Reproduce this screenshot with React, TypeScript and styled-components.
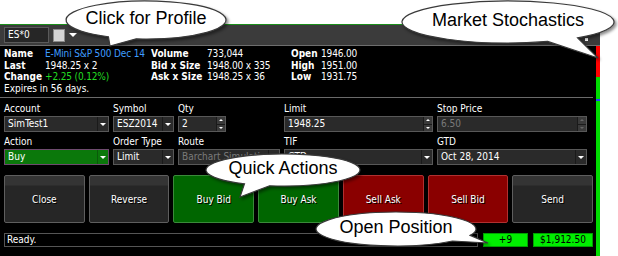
import React from "react";
import styled, { createGlobalStyle } from "styled-components";

const GlobalStyle = createGlobalStyle`
  html, body {
    margin: 0;
    padding: 0;
    background: #fff;
  }
  body {
    font-family: "DejaVu Sans Condensed", "Liberation Sans", Arial, sans-serif;
  }
`;

const Stage = styled.div`
  position: relative;
  width: 618px;
  height: 256px;
  overflow: hidden;
  background: #fff;
`;

const Panel = styled.div`
  margin-top: 24px;
  width: 600px;
  height: 232px;
  box-sizing: border-box;
  border-top: 1px solid #1b8e1b;
  background: #000;
  display: flex;
  flex-direction: column;
  color: #fff;
  font-size: 10px;
`;

const Header = styled.div`
  height: 20px;
  flex: none;
  display: flex;
  align-items: center;
  gap: 4px;
  padding-left: 4px;
  background: #3b3b3b;
  border-bottom: 1px solid #6e6e6e;
`;

const SymbolInput = styled.div`
  width: 45px;
  height: 16px;
  box-sizing: border-box;
  border: 1px solid #5a5a5a;
  background: #262626;
  padding-left: 3px;
  line-height: 14px;
`;

const CheckBox = styled.div`
  width: 10px;
  height: 11px;
  border: 1px solid #8a8a8a;
  background: #d4d4d4;
`;

const HeaderMarker = styled.div`
  margin-left: auto;
  margin-right: 12px;
  align-self: flex-end;
  margin-bottom: 4px;
  width: 3px;
  height: 3px;
  background: #fff;
`;

const Body = styled.div`
  flex: 1;
  display: flex;
  min-height: 0;
`;

const Content = styled.div`
  flex: 1;
  display: flex;
  flex-direction: column;
  padding-right: 3px;
`;

const StochBar = styled.div`
  width: 4px;
  display: flex;
  flex-direction: column;
`;

const StochSegment = styled.div<{ $color: string; $height?: number }>`
  background: ${(p) => p.$color};
  ${(p) => (p.$height ? `height: ${p.$height}px;` : "flex: 1;")}
`;

const Info = styled.div`
  display: grid;
  grid-template-columns: 41px 106px 56px 84px 30px auto;
  padding: 2px 4px 3px;
  line-height: 11.5px;
  border-bottom: 1px solid #6a6a6a;
  white-space: nowrap;
`;

const InfoLabel = styled.span`
  font-weight: bold;
`;

const InfoValue = styled.span<{ $color?: string }>`
  color: ${(p) => p.$color ?? "#fff"};
  letter-spacing: -0.15px;
`;

const Expires = styled.span`
  grid-column: 1 / -1;
`;

const Form = styled.div`
  display: grid;
  grid-template-columns: 105px 61px 102px 149px 150px;
  column-gap: 4px;
  row-gap: 4px;
  padding: 5px 4px 0;
`;

const Field = styled.div`
  display: flex;
  flex-direction: column;
  gap: 1px;
`;

const FieldLabel = styled.span`
  line-height: 12px;
  white-space: nowrap;
`;

const Control = styled.div<{ $tone?: "dark" | "green"; $width?: number }>`
  height: 16px;
  box-sizing: border-box;
  width: ${(p) => (p.$width ? `${p.$width}px` : "100%")};
  display: flex;
  align-items: stretch;
  border: 1px solid ${(p) => (p.$tone === "green" ? "#6e4a6e" : "#585858")};
  background: ${(p) => (p.$tone === "green" ? "#0b780b" : "#2a2a2a")};
`;

const ControlText = styled.span<{ $muted?: boolean }>`
  flex: 1;
  padding-left: 3px;
  line-height: 14px;
  overflow: hidden;
  white-space: nowrap;
  color: ${(p) => (p.$muted ? "#7a7a7a" : "#fff")};
`;

const ArrowCell = styled.div<{ $tone?: "dark" | "green" }>`
  width: 10px;
  display: flex;
  align-items: center;
  justify-content: center;
  border-left: 1px solid ${(p) => (p.$tone === "green" ? "#0a5a0a" : "#1a1a1a")};
`;

const SpinCell = styled.div`
  width: 8px;
  display: flex;
  flex-direction: column;
  border-left: 1px solid #1a1a1a;
`;

const SpinHalf = styled.div`
  flex: 1;
  display: flex;
  align-items: center;
  justify-content: center;
  background: #3a3a3a;
  & + & {
    border-top: 1px solid #1a1a1a;
  }
`;

const Caret = styled.span<{ $up?: boolean; $muted?: boolean; $size?: number }>`
  width: 0;
  height: 0;
  border-left: ${(p) => p.$size ?? 3}px solid transparent;
  border-right: ${(p) => p.$size ?? 3}px solid transparent;
  ${(p) =>
    p.$up
      ? `border-bottom: ${p.$size ?? 3}px solid ${p.$muted ? "#666" : "#fff"};`
      : `border-top: ${p.$size ?? 3}px solid ${p.$muted ? "#666" : "#fff"};`}
`;

const Buttons = styled.div`
  display: flex;
  gap: 4px;
  margin-top: 10px;
  padding-left: 4px;
`;

type Tone = "dark" | "green" | "red";

const tones: Record<Tone, { top: string; bottom: string; border: string }> = {
  dark: { top: "#343434", bottom: "#262626", border: "#5e5e5e" },
  green: { top: "#006600", bottom: "#006600", border: "#3a8a3a" },
  red: { top: "#8a0000", bottom: "#8a0000", border: "#b03030" },
};

const ActionButton = styled.button<{ $tone: Tone }>`
  flex: 1;
  height: 48px;
  border-radius: 2px;
  border: 1px solid ${(p) => tones[p.$tone].border};
  background: linear-gradient(
    to bottom,
    ${(p) => tones[p.$tone].top} 0,
    ${(p) => tones[p.$tone].top} 9px,
    ${(p) => tones[p.$tone].bottom} 10px
  );
  color: #fff;
  font-family: inherit;
  font-size: 10px;
  text-shadow: 1px 1px 0 #000;
  padding: 0;
`;

const Status = styled.div`
  display: flex;
  gap: 5px;
  margin-top: 10px;
  padding-left: 4px;
  height: 14px;
`;

const StatusText = styled.div`
  flex: 1;
  box-sizing: border-box;
  border: 1px solid #555;
  padding-left: 2px;
  line-height: 12px;
`;

const PositionBox = styled.div<{ $width: number }>`
  width: ${(p) => p.$width}px;
  box-sizing: border-box;
  border: 1px solid #00a000;
  background: #00ee00;
  color: #000;
  text-align: center;
  line-height: 12px;
`;

const BubbleBox = styled.div`
  position: absolute;
  display: flex;
  align-items: center;
  justify-content: center;
  font-family: "Liberation Sans", Arial, sans-serif;
  font-size: 18px;
  color: #000;
  pointer-events: none;
`;

const BubbleShape = styled.svg`
  position: absolute;
  left: 0;
  top: 0;
  overflow: visible;
  filter: drop-shadow(2px 2px 1.5px rgba(0, 0, 0, 0.45));
`;

const BubbleText = styled.span`
  position: relative;
  margin-top: -3px;
  white-space: nowrap;
`;

function Bubble(props: {
  cx: number;
  cy: number;
  rx: number;
  ry: number;
  a: number;
  b: number;
  tip: [number, number];
  text: string;
}) {
  const { cx, cy, rx, ry, a, b, tip, text } = props;
  const left = cx - rx;
  const top = cy - ry;
  const pt = (deg: number) => {
    const r = (deg * Math.PI) / 180;
    return [rx + rx * Math.cos(r), ry + ry * Math.sin(r)];
  };
  const [ax, ay] = pt(a);
  const [bx, by] = pt(b);
  const tx = tip[0] - left;
  const ty = tip[1] - top;
  const d = `M ${ax} ${ay} L ${tx} ${ty} L ${bx} ${by} A ${rx} ${ry} 0 1 1 ${ax} ${ay} Z`;
  return (
    <BubbleBox style={{ left, top, width: rx * 2, height: ry * 2 }}>
      <BubbleShape width={rx * 2} height={ry * 2}>
        <path d={d} fill="#fff" stroke="#3a3a3a" strokeWidth={1.2} />
      </BubbleShape>
      <BubbleText>{text}</BubbleText>
    </BubbleBox>
  );
}

function Select({ value, tone, muted }: { value: string; tone?: "dark" | "green"; muted?: boolean }) {
  return (
    <Control $tone={tone}>
      <ControlText $muted={muted}>{value}</ControlText>
      <ArrowCell $tone={tone}>
        <Caret />
      </ArrowCell>
    </Control>
  );
}

function Spin({ value, width, muted }: { value: string; width?: number; muted?: boolean }) {
  return (
    <Control $width={width}>
      <ControlText $muted={muted}>{value}</ControlText>
      <SpinCell>
        <SpinHalf>
          <Caret $up $size={2} $muted={muted} />
        </SpinHalf>
        <SpinHalf>
          <Caret $size={2} $muted={muted} />
        </SpinHalf>
      </SpinCell>
    </Control>
  );
}

export default function App() {
  return (
    <Stage>
      <GlobalStyle />
      <Panel>
        <Header>
          <SymbolInput>ES*0</SymbolInput>
          <CheckBox />
          <Caret $size={4} />
          <HeaderMarker />
        </Header>
        <Body>
          <Content>
            <Info>
              <InfoLabel>Name</InfoLabel>
              <InfoValue $color="#3f9dff">E-Mini S&amp;P 500 Dec 14</InfoValue>
              <InfoLabel>Volume</InfoLabel>
              <InfoValue>733,044</InfoValue>
              <InfoLabel>Open</InfoLabel>
              <InfoValue>1946.00</InfoValue>

              <InfoLabel>Last</InfoLabel>
              <InfoValue>1948.25 x 2</InfoValue>
              <InfoLabel>Bid x Size</InfoLabel>
              <InfoValue>1948.00 x 335</InfoValue>
              <InfoLabel>High</InfoLabel>
              <InfoValue>1951.00</InfoValue>

              <InfoLabel>Change</InfoLabel>
              <InfoValue $color="#22dd22">+2.25 (0.12%)</InfoValue>
              <InfoLabel>Ask x Size</InfoLabel>
              <InfoValue>1948.25 x 36</InfoValue>
              <InfoLabel>Low</InfoLabel>
              <InfoValue>1931.75</InfoValue>

              <Expires>Expires in 56 days.</Expires>
            </Info>

            <Form>
              <Field>
                <FieldLabel>Account</FieldLabel>
                <Select value="SimTest1" />
              </Field>
              <Field>
                <FieldLabel>Symbol</FieldLabel>
                <Select value="ESZ2014" />
              </Field>
              <Field>
                <FieldLabel>Qty</FieldLabel>
                <Spin value="2" width={48} />
              </Field>
              <Field>
                <FieldLabel>Limit</FieldLabel>
                <Spin value="1948.25" />
              </Field>
              <Field>
                <FieldLabel>Stop Price</FieldLabel>
                <Spin value="6.50" muted />
              </Field>

              <Field>
                <FieldLabel>Action</FieldLabel>
                <Select value="Buy" tone="green" />
              </Field>
              <Field>
                <FieldLabel>Order Type</FieldLabel>
                <Select value="Limit" />
              </Field>
              <Field>
                <FieldLabel>Route</FieldLabel>
                <Select value="Barchart Simulation" muted />
              </Field>
              <Field>
                <FieldLabel>TIF</FieldLabel>
                <Select value="GTD" />
              </Field>
              <Field>
                <FieldLabel>GTD</FieldLabel>
                <Select value="Oct 28, 2014" />
              </Field>
            </Form>

            <Buttons>
              <ActionButton $tone="dark">Close</ActionButton>
              <ActionButton $tone="dark">Reverse</ActionButton>
              <ActionButton $tone="green">Buy Bid</ActionButton>
              <ActionButton $tone="green">Buy Ask</ActionButton>
              <ActionButton $tone="red">Sell Ask</ActionButton>
              <ActionButton $tone="red">Sell Bid</ActionButton>
              <ActionButton $tone="dark">Send</ActionButton>
            </Buttons>

            <Status>
              <StatusText>Ready.</StatusText>
              <PositionBox $width={45}>+9</PositionBox>
              <PositionBox $width={60}>$1,912.50</PositionBox>
            </Status>
          </Content>
          <StochBar>
            <StochSegment $color="#ff0000" $height={31} />
            <StochSegment $color="#00dd00" $height={22} />
            <StochSegment $color="#2a3cff" $height={2} />
            <StochSegment $color="#00dd00" />
          </StochBar>
        </Body>
      </Panel>

      <Bubble cx={146} cy={20} rx={80} ry={19} a={97} b={118} tip={[110, 46]} text="Click for Profile" />
      <Bubble cx={508} cy={22} rx={106} ry={21} a={49} b={68} tip={[598, 58]} text="Market Stochastics" />
      <Bubble cx={283} cy={170} rx={77} ry={16} a={100} b={120} tip={[240, 197]} text="Quick Actions" />
      <Bubble cx={396} cy={229} rx={80} ry={17} a={22} b={45} tip={[488, 243]} text="Open Position" />
    </Stage>
  );
}
